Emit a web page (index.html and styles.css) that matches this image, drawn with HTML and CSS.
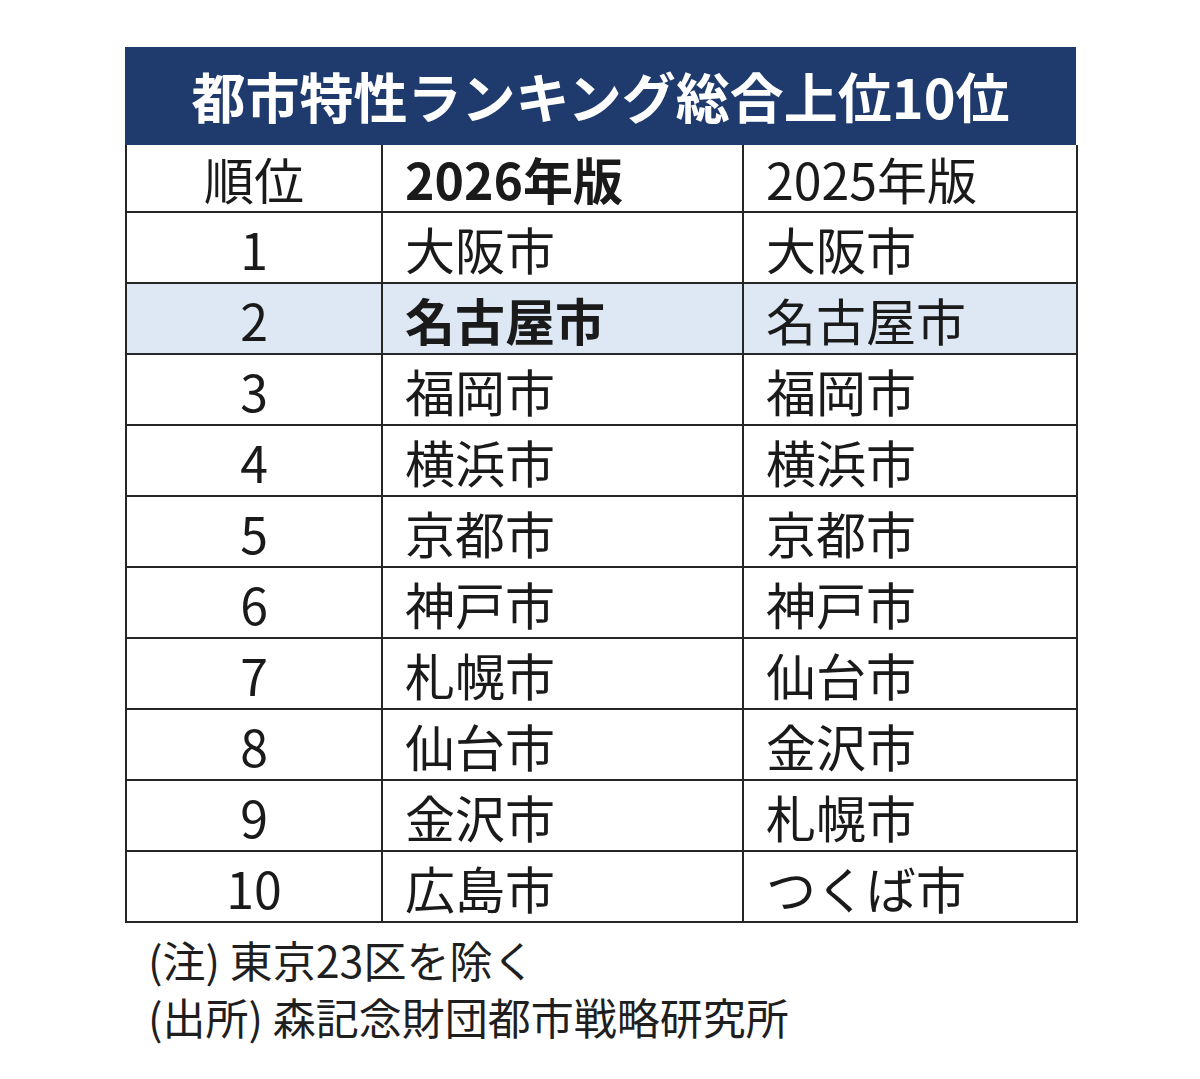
FILE: index.html
```html
<!DOCTYPE html>
<html lang="ja">
<head>
<meta charset="utf-8">
<title>都市特性ランキング総合上位10位</title>
<link rel="stylesheet" href="styles.css">
</head>
<body>
<div class="wrap">
  <div class="title">都市特性ランキング総合上位10位</div>
  <table class="rank">
    <colgroup><col class="c1"><col class="c2"><col class="c3"></colgroup>
    <tr class="head"><td class="num">順位</td><td class="bold">2026年版</td><td>2025年版</td></tr>
    <tr><td class="num">1</td><td>大阪市</td><td>大阪市</td></tr>
    <tr class="hl"><td class="num">2</td><td class="bold">名古屋市</td><td>名古屋市</td></tr>
    <tr><td class="num">3</td><td>福岡市</td><td>福岡市</td></tr>
    <tr><td class="num">4</td><td>横浜市</td><td>横浜市</td></tr>
    <tr><td class="num">5</td><td>京都市</td><td>京都市</td></tr>
    <tr><td class="num">6</td><td>神戸市</td><td>神戸市</td></tr>
    <tr><td class="num">7</td><td>札幌市</td><td>仙台市</td></tr>
    <tr><td class="num">8</td><td>仙台市</td><td>金沢市</td></tr>
    <tr><td class="num">9</td><td>金沢市</td><td>札幌市</td></tr>
    <tr><td class="num">10</td><td>広島市</td><td>つくば市</td></tr>
  </table>
  <div class="notes">
    <p>(注) 東京23区を除く</p>
    <p>(出所) 森記念財団都市戦略研究所</p>
  </div>
</div>
</body>
</html>
```

FILE: styles.css
```css
html, body {
  margin: 0;
  padding: 0;
  background: #ffffff;
}
body {
  font-family: "Noto Sans CJK JP", "Noto Sans", sans-serif;
  color: #1a1a1a;
}
.wrap {
  width: 951px;
  margin-left: 125px;
  padding-top: 47px;
}
.title {
  background: #1f3a6c;
  color: #ffffff;
  font-weight: 700;
  font-size: 54px;
  height: 98px;
  line-height: 98px;
  text-align: center;
  box-sizing: border-box;
}
.rank {
  width: 951px;
  border-collapse: collapse;
  table-layout: fixed;
}
.rank col.c1 { width: 256px; }
.rank col.c2 { width: 361px; }
.rank col.c3 { width: 334px; }
.rank td {
  border: 2px solid #262626;
  height: 69px;
  padding: 0 0 0 22px;
  font-size: 50px;
  line-height: 1;
  vertical-align: middle;
  white-space: nowrap;
}
.rank tr.head td { height: 66px; }
.rank tr:first-child td { border-top: none; }
.rank td.num {
  text-align: center;
  padding: 0;
}
.rank td.bold { font-weight: 700; }
.rank tr.hl td { background: #dde8f4; }
.notes {
  padding: 8px 0 0 23px;
}
.notes p {
  margin: 0;
  font-size: 43px;
  line-height: 57px;
  color: #1f1f1f;
}
```
